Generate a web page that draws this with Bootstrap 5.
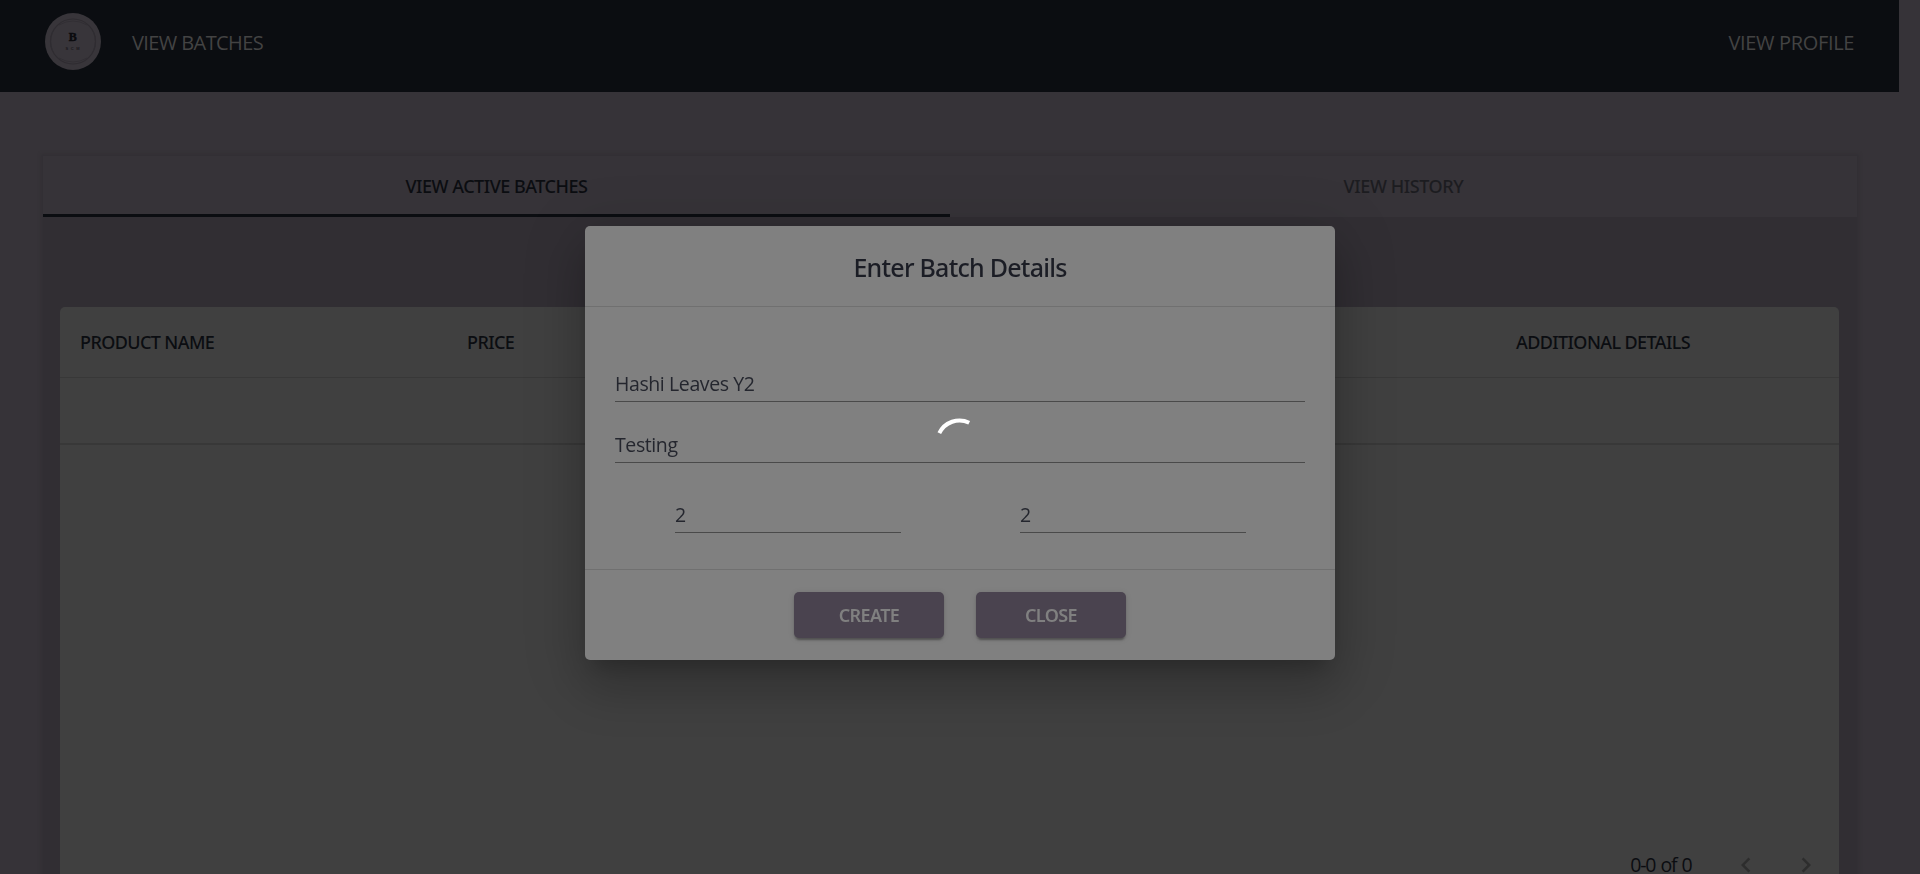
<!DOCTYPE html>
<html lang="en">
<head>
<meta charset="utf-8">
<meta name="viewport" content="width=device-width, initial-scale=1">
<title>Batches</title>
<link href="https://cdn.jsdelivr.net/npm/bootstrap@5.3.0/dist/css/bootstrap.min.css" rel="stylesheet">
<style>
  body { background: #363338; color: #0b0d11; font-family: "Open Sans", "Noto Sans", sans-serif; font-size: 20px; height: 874px; overflow: hidden; }
  .topbar { background: #0b0d11; width: 1899px; height: 92px; padding: 0 45px 9px; }
  .topbar a { color: #434343; line-height: 28px; letter-spacing: -.6px; margin: 3px 0 0 31px; }
  .topbar a.profile { letter-spacing: -.35px; }
  .panel { width: 1814px; height: 718px; margin: 64px 0 0 43px; background: #312e33; box-shadow: 0 0 3px 2px #322f34; }
  .tabbar { height: 61px; background: #363338; }
  .tabbar button { border: 0; background: none; font: 500 18px "Noto Sans", sans-serif; color: #0b0d11; padding: 2px 0 0; border-bottom: 3px solid transparent; letter-spacing: -.48px; }
  .tabbar button.current { border-bottom-color: #0b0d11; }
  .tabbar button:not(.current) { color: #1c1c20; letter-spacing: -.4px; }
  .grid-card { background: #404040; border-radius: 5px 5px 0 0; height: 567px; margin: 90px 18px 0 17px; }
  .grid-head { height: 71px; border-bottom: 1px solid #383838; font: 500 18px "Noto Sans", sans-serif; padding: 0 0 0 20px; letter-spacing: -.6px; }
  .head-name { width: 387px; }
  .head-price { width: 1049px; }
  .grid-row { height: 67px; border-bottom: 2px solid #383838; }
  .pager { padding-right: 18px; height: 20px; margin-top: 409px; }
  .pager span { font-size: 19.5px; line-height: 20px; letter-spacing: -1.1px; word-spacing: 1px; margin: 1px 39px 0 0; }
  .pager svg { width: 30px; height: 30px; fill: #2d2d2d; margin-top: -4px; }
  .pager svg + svg { margin-left: 30.5px; }
  .dialog-layer { position: fixed; inset: 0; }
  .dialog-box { width: 750px; height: 434px; margin-top: 12px; background: #808080; border-radius: 5px; color: #1b1d25;
    box-shadow: 0 14px 19px -9px rgba(0,0,0,.2), 0 30px 48px 4px rgba(0,0,0,.14), 0 11px 58px 10px rgba(0,0,0,.12); }
  .dialog-top { height: 81px; border-bottom: 1px solid #707070; }
  .dialog-top h2 { font: 500 25px "Noto Sans", sans-serif; margin: 1px 0 0; letter-spacing: -.75px; }
  .dialog-mid { height: 263px; border-bottom: 1px solid #707070; padding: 58px 30px 0; }
  .field { height: 37px; border: 0; border-bottom: 1px solid #4a4a4a; border-radius: 0; background: none; color: #24262e; padding: 0; display: block; outline: 0; font-size: 19.5px; letter-spacing: -.4px; }
  .field + .field { margin-top: 24px; }
  .halves { padding: 33px 60px 0; gap: 119px; }
  .halves .field { width: 226px; margin: 0; padding-top: 1px; }
  .dialog-foot { padding-top: 22px; gap: 32px; }
  .act { width: 150px; height: 46px; border: 0; border-radius: 5px; background: #4a434f; color: #808080; font: 600 18px "Noto Sans", sans-serif; letter-spacing: -.6px; padding: 0;
    box-shadow: 0 4px 2px -2px rgba(0,0,0,.2), 0 2px 2px rgba(0,0,0,.14), 0 1px 6px rgba(0,0,0,.12); }
  .loader { position: absolute; left: 930px; top: 412px; }
</style>
</head>
<body>
<nav class="topbar d-flex align-items-center">
  <svg width="56" height="57" viewBox="0 0 56 57" aria-label="B SCM">
    <ellipse cx="28" cy="28.5" rx="28" ry="28.5" fill="#38353a"/>
    <circle cx="28" cy="28.5" r="22.5" fill="none" stroke="#2f2c31" stroke-width="1.2"/>
    <path d="M14 12Q28 4 42 12M14 45Q28 53 42 45M8 18Q3 28 8 39M48 18Q53 28 48 39" fill="none" stroke="#302d32" stroke-width=".8"/>
    <text x="27.7" y="28" text-anchor="middle" font-family="Liberation Serif, serif" font-weight="700" font-size="12.5" textLength="8" lengthAdjust="spacingAndGlyphs" fill="#0b0b0e" stroke="#0b0b0e" stroke-width=".5">B</text>
    <text x="28.8" y="37.2" text-anchor="middle" font-family="Liberation Sans, sans-serif" font-weight="700" font-size="4" letter-spacing="2.5" fill="#1a181c">SCM</text>
  </svg>
  <a class="text-decoration-none" href="#">VIEW BATCHES</a>
  <a class="profile text-decoration-none ms-auto" href="#">VIEW PROFILE</a>
</nav>

<main class="panel">
  <div class="tabbar d-flex">
    <button class="current w-50">VIEW ACTIVE BATCHES</button>
    <button class="w-50">VIEW HISTORY</button>
  </div>
  <section class="grid-card">
    <div class="grid-head d-flex align-items-center">
      <span class="head-name">PRODUCT NAME</span>
      <span class="head-price">PRICE</span>
      <span>ADDITIONAL DETAILS</span>
    </div>
    <div class="grid-row"></div>
    <div class="pager d-flex justify-content-end align-items-start">
      <span>0-0 of 0</span>
      <svg viewBox="0 0 24 24"><path d="M15.41 7.41 14 6l-6 6 6 6 1.41-1.41L10.83 12z"/></svg>
      <svg viewBox="0 0 24 24"><path d="M10 6 8.59 7.41 13.17 12l-4.58 4.59L10 18l6-6z"/></svg>
    </div>
  </section>
</main>

<div class="dialog-layer d-flex align-items-center justify-content-center">
  <div class="dialog-box" role="dialog">
    <div class="dialog-top d-flex align-items-center justify-content-center"><h2>Enter Batch Details</h2></div>
    <div class="dialog-mid">
      <input class="field w-100" value="Hashi Leaves Y2">
      <input class="field w-100" value="Testing">
      <div class="halves d-flex">
        <input class="field" value="2">
        <input class="field" value="2">
      </div>
    </div>
    <div class="dialog-foot d-flex justify-content-center">
      <button class="act">CREATE</button>
      <button class="act">CLOSE</button>
    </div>
  </div>
  <svg class="loader" width="60" height="60" viewBox="0 0 60 60">
    <path d="M9.3 21.2A22.4 22.4 0 0 1 39.2 10.7" fill="none" stroke="#fff" stroke-width="4"/>
  </svg>
</div>
</body>
</html>
